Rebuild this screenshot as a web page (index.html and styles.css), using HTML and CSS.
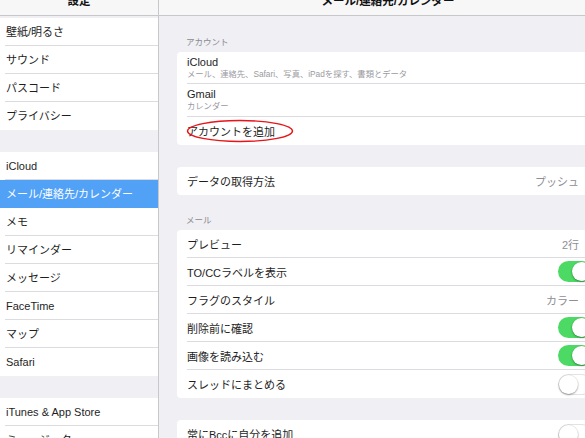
FILE: index.html
```html
<!DOCTYPE html>
<html lang="ja">
<head>
<meta charset="utf-8">
<title>設定 - メール/連絡先/カレンダー</title>
<link rel="stylesheet" href="styles.css">
</head>
<body>
<div class="app">
  <aside class="sidebar">
    <header class="nav-bar"><span class="nav-title">設定</span></header>
    <div class="spacer-top"></div>
    <ul class="group">
      <li class="row">壁紙/明るさ</li>
      <li class="row">サウンド</li>
      <li class="row">パスコード</li>
      <li class="row">プライバシー</li>
    </ul>
    <div class="spacer"></div>
    <ul class="group">
      <li class="row">iCloud</li>
      <li class="row selected">メール/連絡先/カレンダー</li>
      <li class="row">メモ</li>
      <li class="row">リマインダー</li>
      <li class="row">メッセージ</li>
      <li class="row">FaceTime</li>
      <li class="row">マップ</li>
      <li class="row">Safari</li>
    </ul>
    <div class="spacer"></div>
    <ul class="group">
      <li class="row">iTunes &amp; App Store</li>
      <li class="row">ミュージック</li>
    </ul>
  </aside>

  <main class="detail">
    <header class="nav-bar detail-bar"><span class="nav-title">メール/連絡先/カレンダー</span></header>

    <div class="section-label first">アカウント</div>
    <ul class="card">
      <li class="cell tall">
        <span class="cell-title">iCloud</span>
        <span class="cell-sub">メール、連絡先、Safari、写真、iPadを探す、書類とデータ</span>
      </li>
      <li class="cell tall">
        <span class="cell-title">Gmail</span>
        <span class="cell-sub">カレンダー</span>
      </li>
      <li class="cell annotated">
        <span class="cell-label">アカウントを追加</span>
        <svg class="circle-mark" width="112" height="26" viewBox="0 0 112 26" aria-hidden="true">
          <ellipse cx="55" cy="13" rx="52.5" ry="10.5" fill="none" stroke="#e8141a" stroke-width="1.4"/>
        </svg>
      </li>
    </ul>

    <div class="gap"></div>
    <ul class="card">
      <li class="cell"><span class="cell-label">データの取得方法</span><span class="cell-value">プッシュ</span></li>
    </ul>

    <div class="section-label">メール</div>
    <ul class="card">
      <li class="cell"><span class="cell-label">プレビュー</span><span class="cell-value">2行</span></li>
      <li class="cell"><span class="cell-label">TO/CCラベルを表示</span><span class="switch on"></span></li>
      <li class="cell"><span class="cell-label">フラグのスタイル</span><span class="cell-value">カラー</span></li>
      <li class="cell"><span class="cell-label">削除前に確認</span><span class="switch on"></span></li>
      <li class="cell"><span class="cell-label">画像を読み込む</span><span class="switch on"></span></li>
      <li class="cell"><span class="cell-label">スレッドにまとめる</span><span class="switch"></span></li>
    </ul>

    <div class="gap"></div>
    <ul class="card">
      <li class="cell"><span class="cell-label">常にBccに自分を追加</span><span class="switch"></span></li>
    </ul>
  </main>
</div>
</body>
</html>
```
FILE: styles.css
```css
* { box-sizing: border-box; }

html, body {
  margin: 0;
  padding: 0;
  width: 585px;
  height: 438px;
  overflow: hidden;
  background: #efeff4;
}

body {
  font-family: "Liberation Sans", "Noto Sans CJK JP", sans-serif;
  color: #1e1e1e;
  font-size: 11px;
}

ul { list-style: none; margin: 0; padding: 0; }

.app {
  display: flex;
  height: 438px;
  width: 585px;
  overflow: hidden;
}

/* ---------- nav bars ---------- */
.nav-bar {
  height: 16px;
  background: #f7f7f8;
  border-bottom: 1px solid #c8c7cc;
  display: flex;
  justify-content: center;
  overflow: hidden;
}

.detail-bar { padding-left: 32px; }

.nav-title {
  font-weight: bold;
  font-size: 11.5px;
  line-height: 14px;
  margin-top: -6px;
  color: #111;
  white-space: nowrap;
}

/* ---------- sidebar ---------- */
.sidebar {
  width: 159px;
  flex: none;
  border-right: 1px solid #c8c7cc;
  background: #efeff4;
  overflow: hidden;
}

.spacer-top { height: 2px; }
.spacer { height: 22px; }

.group { background: #fff; }

.row {
  height: 28px;
  line-height: 28px;
  padding-left: 6px;
  white-space: nowrap;
  background: linear-gradient(#dcdce0, #dcdce0) no-repeat 5px 100% / calc(100% - 5px) 1px;
}

.row:last-child { background: none; }

.row.selected {
  background: #51a1f7;
  color: #fff;
}

/* ---------- detail ---------- */
.detail {
  flex: 1;
  min-width: 0;
  background: #efeff4;
  overflow: hidden;
}

.section-label {
  height: 35px;
  padding: 0 0 5px 27px;
  display: flex;
  align-items: flex-end;
  font-size: 8.5px;
  line-height: 10px;
  color: #8a8a8f;
}

.section-label.first { height: 36px; }

.gap { height: 22px; }

.card {
  margin-left: 18px;
  margin-right: -10px;
  background: #fff;
  border-radius: 4px;
  padding-left: 10px;
}

.cell {
  height: 28px;
  display: flex;
  align-items: center;
  justify-content: space-between;
  padding-right: 16px;
  border-bottom: 1px solid #dcdce0;
  white-space: nowrap;
}

.cell:last-child { border-bottom: none; }

.cell.tall {
  flex-direction: column;
  align-items: flex-start;
  justify-content: flex-start;
  height: 32px;
  padding-top: 4px;
}

.cell.tall + .cell.tall { height: 33px; }

.cell-title {
  font-size: 11px;
  line-height: 13px;
}

.cell-sub {
  font-size: 8.3px;
  line-height: 11px;
  color: #9a9a9f;
}

.cell-value {
  color: #8e8e93;
}

.annotated { position: relative; }

.circle-mark {
  position: absolute;
  left: -2px;
  top: 1px;
}

/* ---------- switches ---------- */
.switch {
  flex: none;
  width: 34px;
  height: 21px;
  border-radius: 11px;
  margin-right: -13px;
  position: relative;
  background: #fff;
  box-shadow: inset 0 0 0 1px #e3e3e6;
}

.switch::after {
  content: "";
  position: absolute;
  top: 1px;
  left: 1px;
  width: 19px;
  height: 19px;
  border-radius: 50%;
  background: #fff;
  box-shadow: 0 1px 2px rgba(0,0,0,0.35), 0 0 0 0.5px rgba(0,0,0,0.08);
}

.switch.on {
  background: #4cd964;
  box-shadow: none;
}

.switch.on::after {
  left: 14px;
}
```
